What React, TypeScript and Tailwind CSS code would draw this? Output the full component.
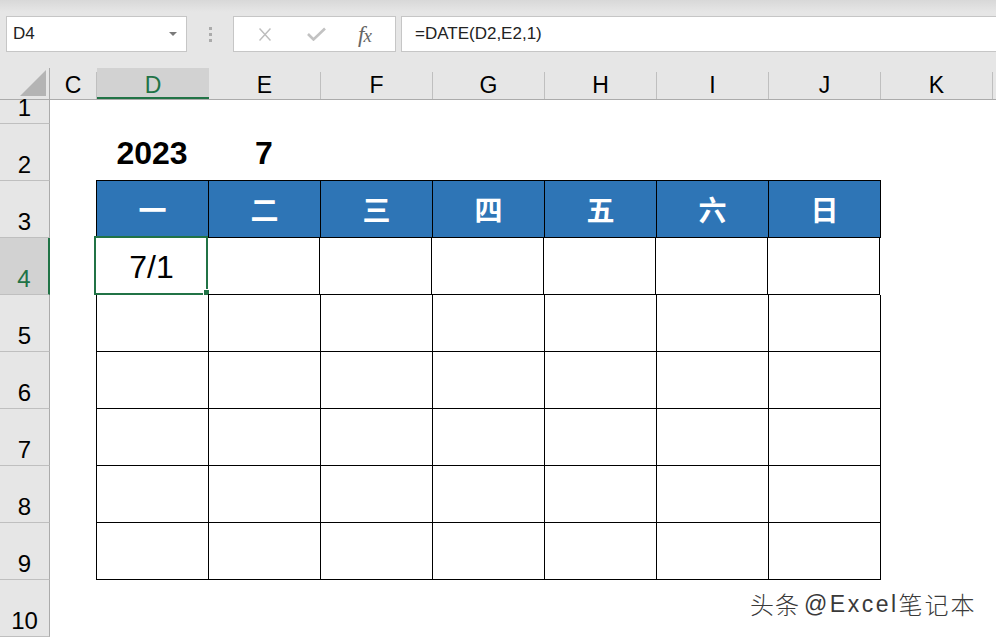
import React from 'react';

const COLS = ['D', 'E', 'F', 'G', 'H', 'I', 'J', 'K'];
const WEEK = ['一', '二', '三', '四', '五', '六', '日'];
const ROW_H: Record<number, string> = {
  1: 'h-[24px]', 2: 'h-[57px]', 3: 'h-[57px]', 4: 'h-[57px]', 5: 'h-[57px]',
  6: 'h-[57px]', 7: 'h-[57px]', 8: 'h-[57px]', 9: 'h-[57px]', 10: 'h-[57px]',
};

function RowHead({ n, active }: { n: number; active?: boolean }) {
  return (
    <div
      className={`w-[50px] shrink-0 flex items-end justify-center pb-[3px] border-b border-b-[#bfbfbf] text-[24px] leading-none ${
        active ? 'bg-[#d2d2d2] text-[#217346] border-r-2 border-r-[#217346]' : 'bg-[#e6e6e6] text-black border-r border-r-[#ababab]'
      }`}
    >
      {n}
    </div>
  );
}

export default function App() {
  return (
    <div className="w-[996px] h-[637px] overflow-hidden bg-white relative font-['Liberation_Sans',Arial,sans-serif]">
      {/* formula bar */}
      <div className="h-[68px] flex items-start pt-[16px] bg-[linear-gradient(#d8d8d8,#e6e6e6_12px)]">
        <div className="ml-[6px] w-[181px] h-[36px] bg-white border border-[#c6c6c6] flex items-center justify-between pl-[6px] pr-[9px]">
          <span className="text-[17px] text-[#222]">D4</span>
          <span className="w-0 h-0 border-l-[4px] border-r-[4px] border-t-[4px] border-l-transparent border-r-transparent border-t-[#7a7a7a]" />
        </div>
        <div className="w-[46px] h-[36px] flex flex-col items-center justify-center gap-[3px]">
          <span className="w-[3px] h-[3px] bg-[#ababab]" />
          <span className="w-[3px] h-[3px] bg-[#ababab]" />
          <span className="w-[3px] h-[3px] bg-[#ababab]" />
        </div>
        <div className="w-[163px] h-[36px] bg-white border border-[#c6c6c6] flex items-center pl-[25px]">
          <svg width="12" height="13" viewBox="0 0 12 13" className="mr-[36px]">
            <path d="M0.5 0.5 L11.5 12.5 M11.5 0.5 L0.5 12.5" stroke="#bdbdbd" strokeWidth="1.5" />
          </svg>
          <svg width="19" height="14" viewBox="0 0 19 14" className="mr-[32px]">
            <path d="M1 7 L6.5 12.5 L18 1.5" stroke="#c2c2c2" strokeWidth="2.6" fill="none" />
          </svg>
          <span className="text-[23px] italic text-[#666] font-['Liberation_Serif',serif] leading-none tracking-[-1px]">
            f<span className="text-[19px]">x</span>
          </span>
        </div>
        <div className="ml-[5px] flex-1 h-[36px] bg-white border border-[#c6c6c6] border-r-0 flex items-center pl-[13px]">
          <span className="text-[17px] text-[#222]">=DATE(D2,E2,1)</span>
        </div>
      </div>

      {/* column headers */}
      <div className="h-[32px] flex bg-[#e6e6e6] border-b border-b-[#ababab] text-[23px] leading-none">
        <div className="w-[50px] shrink-0 border-r border-r-[#ababab] flex items-end justify-end pr-[3px] pb-[3px]">
          <svg width="26" height="26" viewBox="0 0 26 26">
            <path d="M26 0 L26 26 L0 26 Z" fill="#b4b4b4" />
          </svg>
        </div>
        <div className="w-[47px] shrink-0 border-r border-r-[#bfbfbf] flex items-center justify-center mt-[4px]">C</div>
        {COLS.map((c) =>
          c === 'D' ? (
            <div key={c} className="w-[112px] shrink-0 bg-[#d2d2d2] border-b-2 border-b-[#217346] flex items-center justify-center pt-[5px] text-[#217346]">
              {c}
            </div>
          ) : (
            <div key={c} className="w-[112px] shrink-0 border-r border-r-[#bfbfbf] mt-[4px] flex items-center justify-center">
              {c}
            </div>
          )
        )}
        <div className="flex-1" />
      </div>

      {/* row 1 */}
      <div className={`flex ${ROW_H[1]}`}>
        <RowHead n={1} />
      </div>

      {/* row 2 */}
      <div className={`flex ${ROW_H[2]}`}>
        <RowHead n={2} />
        <div className="w-[46px] shrink-0" />
        <div className="w-[785px] shrink-0 flex border-b border-b-black font-bold text-[32px] leading-none">
          <div className="w-[112px] flex items-center justify-center pt-[1px]">2023</div>
          <div className="w-[112px] flex items-center justify-center pt-[1px]">7</div>
        </div>
      </div>

      {/* row 3 header of calendar */}
      <div className={`flex ${ROW_H[3]}`}>
        <RowHead n={3} />
        <div className="w-[46px] shrink-0" />
        <div className="flex border-l border-l-black">
          {WEEK.map((w) => (
            <div
              key={w}
              className="w-[112px] h-full bg-[#2e75b6] border-r border-b border-black flex items-center justify-center text-white font-bold text-[28px] font-['Noto_Sans_CJK_SC',sans-serif]"
            >
              {w}
            </div>
          ))}
        </div>
      </div>

      {/* rows 4-9 */}
      {[4, 5, 6, 7, 8, 9].map((r) => (
        <div key={r} className={`flex ${ROW_H[r]}`}>
          <RowHead n={r} active={r === 4} />
          <div className={r === 4 ? 'w-[46px] shrink-0 -ml-px' : 'w-[46px] shrink-0'} />
          <div className="flex border-l border-l-black">
            {WEEK.map((w, i) => (
              <div key={w} className="w-[112px] h-full border-r border-b border-black relative flex items-center justify-center text-[32px] leading-none">
                {r === 4 && i === 0 && (
                  <>
                    <span className="pt-[2px]">7/1</span>
                    <div className="absolute -left-[2px] -top-[2px] w-[114px] h-[59px] border-2 border-[#217346]" />
                    <div className="absolute left-[107px] top-[51px] w-[7px] h-[7px] bg-[#217346] border border-white" />
                  </>
                )}
              </div>
            ))}
          </div>
        </div>
      ))}

      {/* row 10 */}
      <div className={`flex ${ROW_H[10]}`}>
        <RowHead n={10} />
      </div>

      <div className="absolute left-[750px] top-[590px] flex items-center text-[#3a3a3a] [text-shadow:0_0_2px_#fff,0_0_2px_#fff] leading-none h-[28px]">
        <span className="text-[24px] font-['Noto_Sans_CJK_SC',sans-serif] font-light tracking-[1px]">头条</span>
        <span className="ml-[4px] text-[23px] font-['Liberation_Sans',sans-serif] tracking-[2.5px]">@Excel</span>
        <span className="text-[24px] font-['Noto_Sans_CJK_SC',sans-serif] font-light tracking-[2px]">笔记本</span>
      </div>
    </div>
  );
}
